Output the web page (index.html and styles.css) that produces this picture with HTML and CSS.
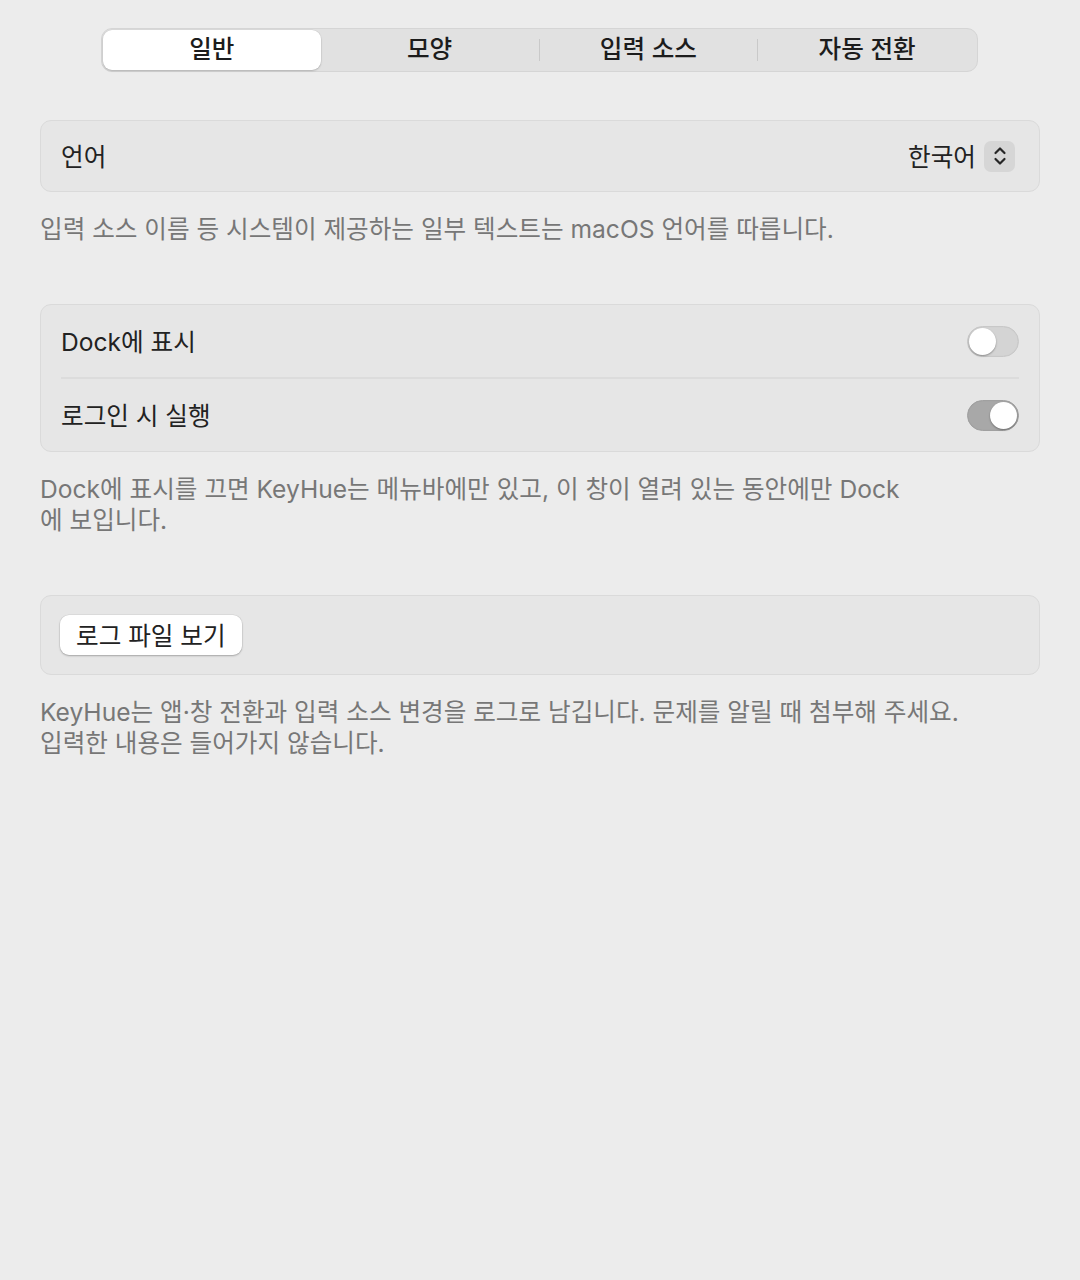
FILE: index.html
```html
<!DOCTYPE html>
<html lang="ko">
<head>
<meta charset="utf-8">
<link rel="stylesheet" href="styles.css">
</head>
<body>
<div class="page">
  <div class="tabs">
    <div class="tab active">일반</div>
    <div class="tab">모양</div>
    <div class="sep"></div>
    <div class="tab">입력 소스</div>
    <div class="sep"></div>
    <div class="tab">자동 전환</div>
  </div>

  <div class="card first">
    <div class="row">
      <span class="label">언어</span>
      <div class="popup">
        <span>한국어</span>
        <span class="stepper">
          <svg width="16" height="22" viewBox="0 0 16 22"><path d="M3.5 8 L8 3.5 L12.5 8 M3.5 14 L8 18.5 L12.5 14" fill="none" stroke="#262626" stroke-width="2.2" stroke-linecap="round" stroke-linejoin="round"/></svg>
        </span>
      </div>
    </div>
  </div>
  <p class="caption">입력 소스 이름 등 시스템이 제공하는 일부 텍스트는 macOS 언어를 따릅니다.</p>

  <div class="card">
    <div class="row">
      <span class="label">Dock에 표시</span>
      <span class="toggle"><span class="knob"></span></span>
    </div>
    <div class="divider"></div>
    <div class="row">
      <span class="label">로그인 시 실행</span>
      <span class="toggle on"><span class="knob"></span></span>
    </div>
  </div>
  <p class="caption">Dock에 표시를 끄면 KeyHue는 메뉴바에만 있고, 이 창이 열려 있는 동안에만 Dock<br>에 보입니다.</p>

  <div class="card pad">
    <button class="btn">로그 파일 보기</button>
  </div>
  <p class="caption">KeyHue는 앱·창 전환과 입력 소스 변경을 로그로 남깁니다. 문제를 알릴 때 첨부해 주세요.<br>입력한 내용은 들어가지 않습니다.</p>
</div>
</body>
</html>
```

FILE: styles.css
```css
* { box-sizing: border-box; }
html, body {
  margin: 0;
  background: #ececec;
}
body {
  font-family: Inter, "Noto Sans CJK KR", sans-serif;
  color: #222;
  font-size: 24.6px;
  width: 1080px;
  height: 1280px;
}
.page {
  padding: 28px 40px 0;
}
.tabs {
  width: 877px;
  height: 44px;
  margin: 0 0 0 61px;
  background: #e1e1e1;
  border: 1px solid #d5d5d5;
  border-radius: 11px;
  display: flex;
  align-items: center;
  padding: 1px;
}
.tab {
  flex: 1;
  height: 40px;
  display: flex;
  align-items: center;
  justify-content: center;
  font-weight: 500;
  color: #1c1c1c;
  font-size: 24.6px;
  padding-bottom: 6px;
}
.tab.active {
  background: #fff;
  border-radius: 9px;
  box-shadow: 0 1px 2px rgba(0,0,0,0.18), 0 0 0 0.5px rgba(0,0,0,0.06);
}
.sep {
  width: 1px;
  height: 22px;
  background: #c9c9c9;
}
.card {
  background: #e6e6e6;
  border: 1px solid #dadada;
  border-radius: 11px;
  margin-top: 59px;
  padding: 0 20px;
}
.card.first { margin-top: 48px; }
.row {
  height: 72px;
  display: flex;
  align-items: center;
  justify-content: space-between;
}
.label { color: #222; padding-bottom: 3px; }
.card.first .row { height: 70px; }
.divider {
  height: 2px;
  background: #dcdcdc;
}
.popup {
  display: flex;
  align-items: center;
  gap: 8px;
  margin-right: 4px;
}
.popup > span:first-child { padding-bottom: 3px; }
.stepper {
  width: 31px;
  height: 31px;
  border-radius: 7px;
  background: #d6d6d6;
  display: flex;
  align-items: center;
  justify-content: center;
}
.toggle {
  width: 52px;
  height: 31px;
  border-radius: 16px;
  background: #d4d4d4;
  border: 1px solid #c8c8c8;
  position: relative;
  box-shadow: inset 0 0 1px rgba(0,0,0,0.1);
}
.toggle .knob {
  position: absolute;
  top: 1px;
  left: 1px;
  width: 27px;
  height: 27px;
  border-radius: 50%;
  background: #fff;
  box-shadow: 0 1px 2px rgba(0,0,0,0.35);
}
.toggle.on {
  background: #a8a8a8;
  border-color: #a0a0a0;
}
.toggle.on .knob {
  left: auto;
  right: 1px;
}
.card.pad {
  padding: 19px 19px;
}
.btn {
  font-family: inherit;
  font-size: 24.6px;
  color: #222;
  background: #fff;
  border: none;
  border-radius: 9px;
  height: 40px;
  padding: 0 16px 3px;
  box-shadow: 0 1px 2px rgba(0,0,0,0.25), 0 0 0 0.5px rgba(0,0,0,0.08);
  display: block;
}
.caption {
  margin: 22px 0 0;
  color: #777;
  font-size: 24.6px;
  line-height: 31px;
}
```
